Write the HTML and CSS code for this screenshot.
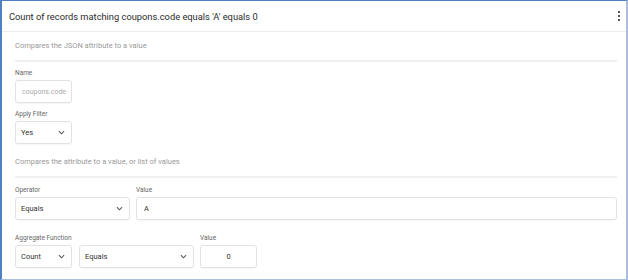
FILE: index.html
```html
<!DOCTYPE html>
<html lang="en">
<head>
    <meta charset="UTF-8">
    <title>Filter Card</title>
    <link rel="stylesheet" href="styles.css">
</head>
<body>
    <div class="frame">
        <!-- Header -->
        <header class="card-header">
            <h1>Count of records matching coupons.code equals 'A' equals 0</h1>
            <span class="kebab"><i></i><i></i><i></i></span>
        </header>

        <div class="card-body">
            <!-- JSON attribute -->
            <p class="desc">Compares the JSON attribute to a value</p>
            <div class="divider"></div>

            <div class="field">
                <label>Name</label>
                <input class="control small name" type="text" placeholder="coupons.code">
            </div>

            <div class="field">
                <label>Apply Filter</label>
                <div class="control select small">
                    <span>Yes</span>
                    <svg class="chevron" viewBox="0 0 8 5"><path d="M1 1l3 3 3-3"/></svg>
                </div>
            </div>

            <!-- Attribute comparison -->
            <p class="desc second">Compares the attribute to a value, or list of values</p>
            <div class="divider"></div>

            <div class="row">
                <div class="field">
                    <label>Operator</label>
                    <div class="control select wide">
                        <span>Equals</span>
                        <svg class="chevron" viewBox="0 0 8 5"><path d="M1 1l3 3 3-3"/></svg>
                    </div>
                </div>
                <div class="field grow">
                    <label>Value</label>
                    <div class="control text">A</div>
                </div>
            </div>

            <div class="row">
                <div class="field">
                    <label>Aggregate Function</label>
                    <div class="row tight">
                        <div class="control select small">
                            <span>Count</span>
                            <svg class="chevron" viewBox="0 0 8 5"><path d="M1 1l3 3 3-3"/></svg>
                        </div>
                        <div class="control select wide">
                            <span>Equals</span>
                            <svg class="chevron" viewBox="0 0 8 5"><path d="M1 1l3 3 3-3"/></svg>
                        </div>
                    </div>
                </div>
                <div class="field">
                    <label>Value</label>
                    <div class="control small center">0</div>
                </div>
            </div>

            <div class="divider last"></div>
        </div>
    </div>
</body>
</html>
```

FILE: styles.css
```css
/* Basic Styles */
* {
    box-sizing: border-box;
}

body {
    margin: 0;
    font-family: Roboto, "Liberation Sans", sans-serif;
    color: #333;
    background: #fff;
}

/* Outer frame */
.frame {
    width: 628px;
    height: 280px;
    border-top: 1px solid #4f80c4;
    border-left: 2px solid #4f80c4;
    border-right: 2px solid #a9bfdd;
    border-bottom: 1px solid #a9bfdd;
    overflow: hidden;
}

/* Header */
.card-header {
    height: 31px;
    padding: 0 6px 0 7px;
    display: flex;
    align-items: center;
    justify-content: space-between;
    border-bottom: 1px solid #ececec;
}

.card-header h1 {
    margin: 0;
    font-size: 9.3px;
    font-weight: 400;
    color: #2b2b2b;
}

.kebab {
    display: flex;
    flex-direction: column;
    gap: 2px;
}

.kebab i {
    width: 2px;
    height: 2px;
    background: #555;
}

/* Body */
.card-body {
    padding: 0 9px 0 13px;
}

.desc {
    margin: 8px 0 8px;
    font-size: 7.5px;
    line-height: 12px;
    color: #9a9a9a;
}

.desc.second {
    margin-top: 12px;
}

.divider {
    height: 2px;
    background: #f0f0f0;
}

.divider.last {
    margin-top: 11px;
}

/* Fields */
.field {
    display: flex;
    flex-direction: column;
    gap: 2px;
    margin-top: 6px;
}

.field label {
    font-size: 6.5px;
    line-height: 10px;
    color: #666;
}

.row {
    display: flex;
    gap: 6px;
}

.row .field {
    margin-top: 7px;
}

.row + .row .field {
    margin-top: 13px;
}

.row.tight {
    gap: 7px;
}

.grow {
    flex: 1;
}

/* Controls */
.control {
    height: 23px;
    border: 1px solid #e2e2e2;
    border-radius: 3px;
    background: #fff;
    box-shadow: 0 1px 1px rgba(0, 0, 0, 0.04);
    font-family: Roboto, "Liberation Sans", sans-serif;
    font-size: 7.5px;
    color: #333;
    padding: 0 5px;
    display: flex;
    align-items: center;
    outline: none;
}

.control.name {
    padding: 0 0 0 6px;
    font-size: 7px;
}

input.control::placeholder {
    color: #aaa;
}

.control.small {
    width: 57px;
}

.control.wide {
    width: 115px;
}

.control.text {
    padding-left: 7px;
}

.control.center {
    justify-content: center;
}

.select {
    justify-content: space-between;
    padding-right: 6px;
}

.chevron {
    width: 7px;
    height: 5px;
    fill: none;
    stroke: #555;
    stroke-width: 1.2;
}
```
